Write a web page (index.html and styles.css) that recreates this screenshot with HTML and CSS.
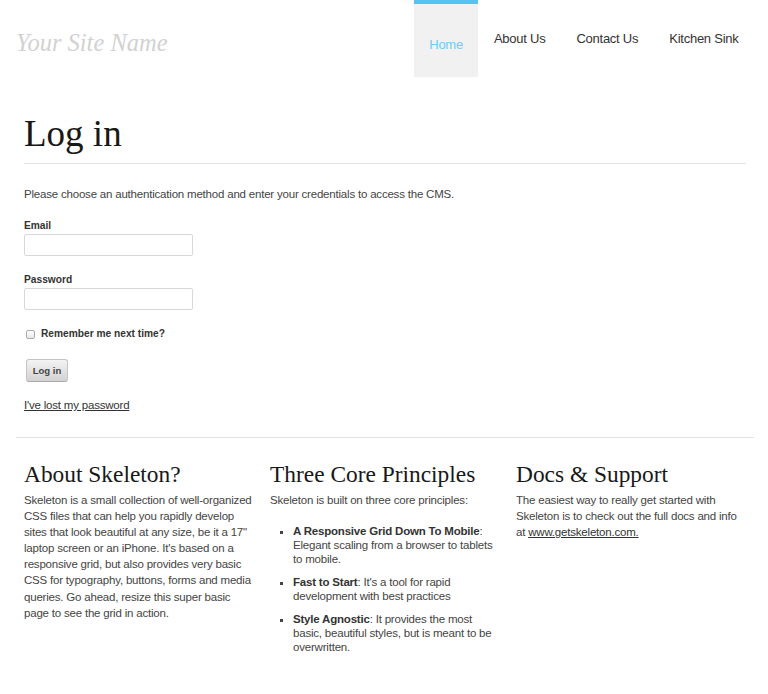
FILE: index.html
```html
<!DOCTYPE html>
<html>
<head>
<meta charset="utf-8">
<link rel="stylesheet" href="styles.css">
</head>
<body>
<div class="container">
  <header class="header">
    <div class="site-name">Your Site Name</div>
    <nav class="nav">
      <a class="nav-item current" href="#">Home</a>
      <a class="nav-item" href="#">About Us</a>
      <a class="nav-item" href="#">Contact Us</a>
      <a class="nav-item" href="#">Kitchen Sink</a>
    </nav>
  </header>

  <main class="main">
    <h1 class="page-title">Log in</h1>
    <p class="intro">Please choose an authentication method and enter your credentials to access the CMS.</p>
    <form class="login-form">
      <div class="field">
        <label class="label" for="email">Email</label>
        <input class="text-input" id="email" type="text">
      </div>
      <div class="field">
        <label class="label" for="pw">Password</label>
        <input class="text-input" id="pw" type="password">
      </div>
      <div class="remember">
        <span class="checkbox"></span>
        <span class="label">Remember me next time?</span>
      </div>
      <button class="button" type="button">Log in</button>
      <a class="lost" href="#">I've lost my password</a>
    </form>
  </main>

  <hr class="divider">

  <section class="columns">
    <div class="column">
      <h3 class="col-title">About Skeleton?</h3>
      <p class="col-text">Skeleton is a small collection of well-organized CSS files that can help you rapidly develop sites that look beautiful at any size, be it a 17" laptop screen or an iPhone. It's based on a responsive grid, but also provides very basic CSS for typography, buttons, forms and media queries. Go ahead, resize this super basic page to see the grid in action.</p>
    </div>
    <div class="column">
      <h3 class="col-title">Three Core Principles</h3>
      <p class="col-text">Skeleton is built on three core principles:</p>
      <ul class="principles">
        <li><strong>A Responsive Grid Down To Mobile</strong>: Elegant scaling from a browser to tablets to mobile.</li>
        <li><strong>Fast to Start</strong>: It's a tool for rapid development with best practices</li>
        <li><strong>Style Agnostic</strong>: It provides the most basic, beautiful styles, but is meant to be overwritten.</li>
      </ul>
    </div>
    <div class="column">
      <h3 class="col-title">Docs &amp; Support</h3>
      <p class="col-text">The easiest way to really get started with Skeleton is to check out the full docs and info at <a href="#" class="plain-link">www.getskeleton.com.</a></p>
    </div>
  </section>
</div>
</body>
</html>
```

FILE: styles.css
```css
* { box-sizing: border-box; }
body {
  margin: 0;
  background: #fff;
  font-family: "Liberation Sans", Arial, sans-serif;
  color: #444;
  font-size: 11.5px;
  letter-spacing: -0.2px;
}
.container {
  width: 738px;
  margin-left: 16px;
}
.header {
  display: flex;
  justify-content: space-between;
  align-items: flex-start;
  height: 77px;
}
.site-name {
  font-family: "Liberation Serif", Georgia, serif;
  font-style: italic;
  font-size: 24.5px;
  letter-spacing: 0;
  color: #d2d2d2;
  margin-top: 29px;
}
.nav {
  display: flex;
  height: 77px;
}
.nav-item {
  display: block;
  padding: 31px 15.5px 0;
  font-size: 13px;
  letter-spacing: -0.25px;
  color: #333;
  text-decoration: none;
}
.nav-item.current {
  background: #f1f1f1;
  border-top: 4px solid #55c3f2;
  padding-top: 33px;
  color: #6ccdf5;
}
.main {
  padding: 0 8px;
}
.page-title {
  font-family: "Liberation Serif", Georgia, serif;
  font-weight: normal;
  font-size: 37px;
  letter-spacing: 0;
  line-height: 44px;
  color: #181818;
  margin: 35px 0 0;
  padding-bottom: 7px;
  border-bottom: 1px solid #e4e4e4;
}
.intro {
  margin: 22px 0 0;
  line-height: 16px;
}
.login-form {
  display: flex;
  flex-direction: column;
  align-items: flex-start;
  margin-top: 16px;
}
.field {
  display: flex;
  flex-direction: column;
  margin-bottom: 16px;
}
.label {
  font-weight: bold;
  font-size: 10.2px;
  letter-spacing: 0;
  color: #333;
  line-height: 16px;
}
.text-input {
  width: 169px;
  height: 22px;
  border: 1px solid #d8d8d8;
  border-radius: 2px;
  margin: 0;
  background: #fff;
}
.remember {
  display: flex;
  align-items: center;
  gap: 6px;
  margin: 0 0 0 2px;
}
.checkbox {
  width: 9px;
  height: 9px;
  border: 1px solid #aaa;
  border-radius: 2px;
  background: linear-gradient(#fff, #e8e8e8);
}
.button {
  margin: 17px 0 0 2px;
  width: 42px;
  height: 23px;
  border: 1px solid #c4c4c4;
  border-bottom-color: #aaa;
  border-radius: 3px;
  background: linear-gradient(#f4f4f4, #d2d2d2);
  font-family: "Liberation Sans", Arial, sans-serif;
  font-weight: bold;
  font-size: 9.5px;
  color: #444;
  padding: 0;
}
.lost {
  margin-top: 15px;
  color: #333;
  line-height: 16px;
}
.divider {
  border: 0;
  border-top: 1px solid #e2e2e2;
  margin: 24px 0 0;
}
.columns {
  display: grid;
  grid-template-columns: repeat(3, 1fr);
}
.column {
  padding: 0 8px;
}
.col-title {
  font-family: "Liberation Serif", Georgia, serif;
  font-weight: normal;
  font-size: 23.4px;
  letter-spacing: 0;
  line-height: 30px;
  color: #181818;
  margin: 21px 0 3px;
}
.col-text {
  margin: 0;
  line-height: 16.1px;
}
.plain-link { color: #333; }
.principles {
  list-style: square;
  margin: 16px 0 0;
  padding-left: 23px;
}
.principles li {
  line-height: 14px;
  margin-bottom: 9px;
}
.principles strong { color: #333; }
```
